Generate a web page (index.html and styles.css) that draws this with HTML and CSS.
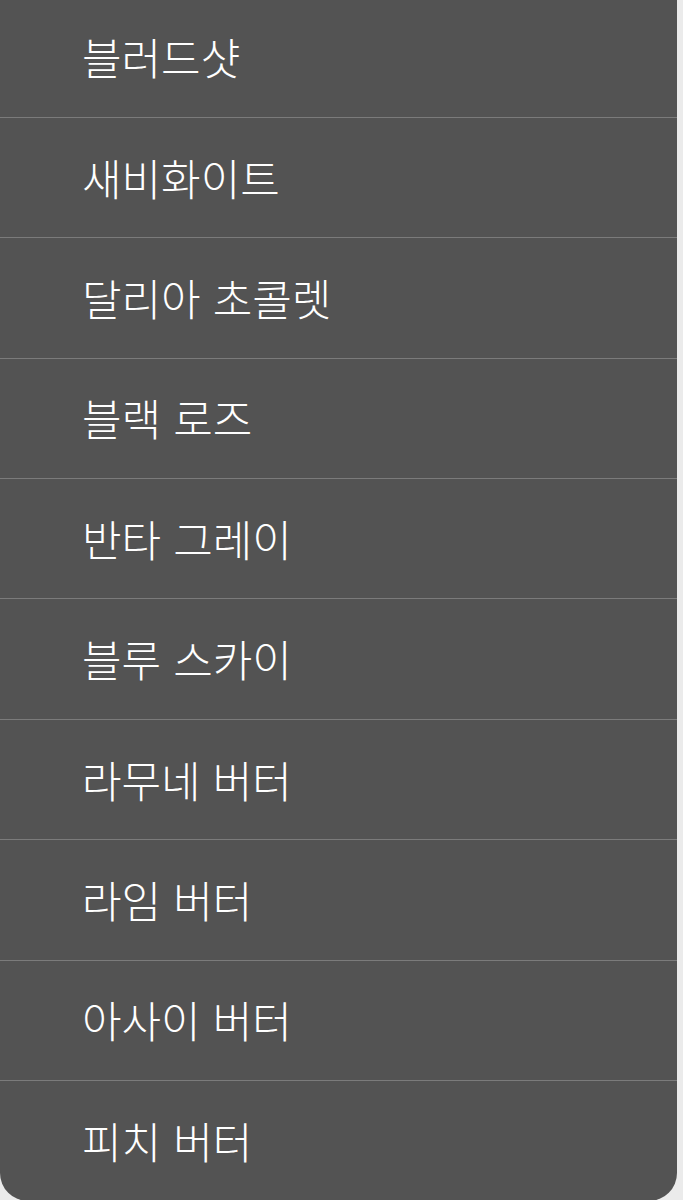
FILE: index.html
```html
<!DOCTYPE html>
<html lang="ko">
<head>
  <meta charset="UTF-8" />
  <meta name="viewport" content="width=device-width, initial-scale=1.0"/>
  <title>메뉴</title>
  <link rel="stylesheet" href="styles.css">
</head>
<body>
  <ul class="menu">
    <li class="item">블러드샷</li>
    <li class="item">새비화이트</li>
    <li class="item">달리아 초콜렛</li>
    <li class="item">블랙 로즈</li>
    <li class="item">반타 그레이</li>
    <li class="item">블루 스카이</li>
    <li class="item">라무네 버터</li>
    <li class="item">라임 버터</li>
    <li class="item">아사이 버터</li>
    <li class="item">피치 버터</li>
  </ul>
</body>
</html>
```

FILE: styles.css
```css
* { margin: 0; padding: 0; box-sizing: border-box; }

html, body {
  height: 100%;
  background: #ebebeb;
  font-family: "Noto Sans CJK KR", "Noto Sans", sans-serif;
  overflow: hidden;
}

.menu {
  list-style: none;
  width: 677px;
  margin-top: -2.4px;
  background: #535353;
  border-radius: 0 0 28px 28px;
  overflow: hidden;
}

.item {
  height: 120.375px;
  display: flex;
  align-items: center;
  padding-left: 82px;
  padding-bottom: 2px;
  color: #fff;
  font-size: 43px;
  font-weight: 300;
  border-bottom: 1px solid #7b7b7b;
}

.item:last-child {
  border-bottom: none;
}
```
